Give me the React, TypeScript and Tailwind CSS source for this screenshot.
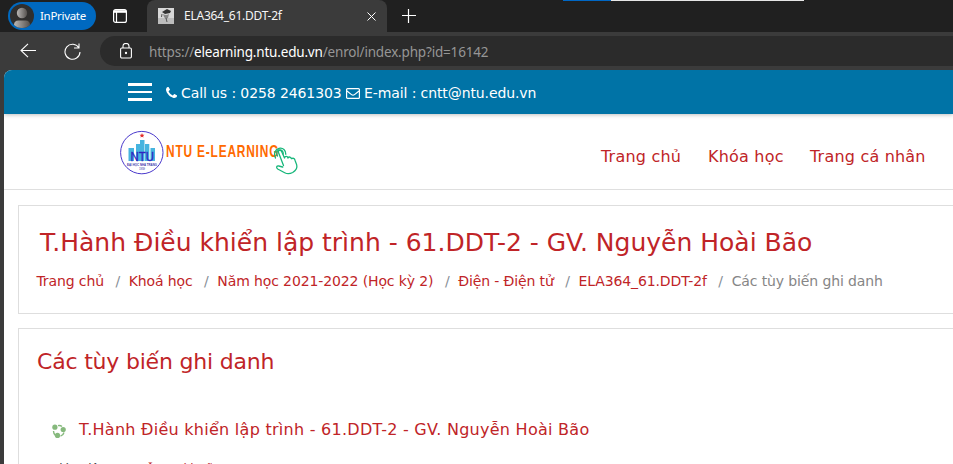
import React from "react";

function TabStrip() {
  return (
    <div className="relative flex h-8 shrink-0 bg-[#202020]">
      <div className="ml-2 mt-[2px] flex h-7 w-[88px] items-center rounded-full bg-[#0069c0] p-[2px] text-white">
        <svg className="size-6 shrink-0" viewBox="0 0 24 24">
          <defs>
            <linearGradient id="person" x1="0" x2="1">
              <stop offset="0" stopColor="#b9b7b5" />
              <stop offset="1" stopColor="#55514e" />
            </linearGradient>
            <clipPath id="round"><circle cx="12" cy="12" r="12" /></clipPath>
          </defs>
          <g clipPath="url(#round)">
            <rect width="24" height="24" fill="#302f2e" />
            <circle cx="12" cy="9" r="5.2" fill="url(#person)" />
            <path d="M4 24v-3q0-4.500 4.500-4.500h7q4.500 0 4.500 4.500v3z" fill="url(#person)" />
          </g>
        </svg>
        <span className="ml-[6px] text-[11.5px] leading-4 tracking-[-0.3px]">InPrivate</span>
      </div>
      <svg className="ml-[17px] mt-[9px] h-[14px] w-[14px]" viewBox="0 0 14 14" fill="none" stroke="#fff">
        <rect x=".6" y=".6" width="12.800" height="12.800" rx="2" strokeWidth="1.200" />
        <path d="M1 2.500h12" strokeWidth="2.600" />
        <path d="M3.500 3v10" strokeWidth="1.200" />
      </svg>
      <div className="ml-[20px] flex h-8 w-[240px] items-center rounded-t-lg bg-[#3b3b3b] text-[#f5f5f5]">
        <svg className="ml-[11px] h-4 w-4" viewBox="0 0 16 16">
          <rect width="16" height="16" fill="#d8d8d8" />
          <rect y="10" width="16" height="6" fill="#bdbdbd" />
          <path d="M4 4l5-3 4 2-1 2-5 1z" fill="#333" />
          <path d="M5 6q3 2 6 0l-1 4-2 1-2-2z" fill="#888" />
          <path d="M4 6l-.5 3M8 10l1 4" stroke="#555" />
        </svg>
        <span className="ml-[10px] text-[12px] leading-4 tracking-[-0.25px]">ELA364_61.DDT-2f</span>
        <svg className="ml-auto mr-[11px] size-[9px]" viewBox="0 0 9 9" stroke="#fff"><path d="M.5.5l8 8M8.500.5l-8 8" /></svg>
      </div>
      <svg className="ml-[15px] mt-[9px] size-[14px]" viewBox="0 0 14 14" stroke="#fff" strokeWidth="1.200"><path d="M0 6.500h14M6.500 0v14" /></svg>
      <div className="absolute left-[563px] top-0 flex h-px w-[241px] bg-[#e6e6e6]"><div className="w-12 bg-[#0067c5]" /></div>
    </div>
  );
}

function Toolbar() {
  return (
    <div className="flex h-[38px] shrink-0 items-center bg-[#3b3b3b]">
      <svg className="ml-5 h-4 w-4" viewBox="0 0 16 16" fill="none" stroke="#fff" strokeWidth="1.100"><path d="M16 7.500H.8M8 .8L1 7.500l7 6.700" /></svg>
      <svg className="ml-7 h-[17px] w-[17px]" viewBox="0 0 17 17" fill="none" stroke="#fff" strokeWidth="1.100"><path d="M15 5A7.500 7.500 0 1 0 16 9M15 .5V5h-5" /></svg>
      <div className="ml-[19px] flex h-[30px] flex-1 items-center rounded-l-full bg-[#2b2b2b]">
        <svg className="ml-5 h-4 w-3" viewBox="0 0 12 16" fill="none" stroke="#fff" strokeWidth="1.100">
          <rect x=".6" y="5" width="10.800" height="10" rx="1.200" />
          <path d="M3 5V3a3 2.600 0 0 1 6 0v2" /><circle cx="6" cy="10" r=".6" fill="#fff" />
        </svg>
        <span className="ml-[17px] mt-[2px] whitespace-pre text-[13.5px] tracking-[-0.18px] text-[#969696]">https://<span className="text-white">elearning.ntu.edu.vn</span>/enrol/index.php?id=16142</span>
      </div>
    </div>
  );
}

function Logo() {
  return (
    <svg className="ml-[111px] mt-[13px] h-[50px] w-[190px] shrink-0" viewBox="0 0 190 50">
      <circle cx="26.800" cy="25.600" r="21.200" fill="#fff" stroke="#4a39cc" />
      <path d="M13.500 21h5.500v13h-5.500zM21 17h4v17h-4zM25 13h4.500v21h-4.500zM30 17h4.300v17h-4.300zM35.500 21h4.500v13h-4.500z" fill="#46b4df" />
      <path d="M27 6l.7 1.700 1.800.1-1.400 1.100.5 1.700-1.600-.9-1.600.9.5-1.700-1.400-1.100 1.800-.1z" fill="#e32b2b" />
      <text x="15.500" y="34" textLength="23.500" lengthAdjust="spacingAndGlyphs" fontSize="12.500" fontFamily="Liberation Sans" fill="#3023c2" stroke="#3023c2" strokeWidth=".3">NTU</text>
      <text x="12" y="39" textLength="30" lengthAdjust="spacingAndGlyphs" fontSize="4" fontWeight="bold" fontFamily="Liberation Sans" fill="#4038aa">ĐẠI HỌC NHA TRANG</text>
      <text x="24" y="42.500" textLength="6" fontSize="3" fontFamily="Liberation Sans" fill="#4038aa">1959</text>
      <text transform="translate(51 30) scale(.73 1)" x="0" y="0" textLength="154" lengthAdjust="spacing" fontSize="16.300" fontWeight="bold" fontFamily="Liberation Sans" fill="#ff6a00">NTU E-LEARNING</text>
      <g transform="translate(0 2.500)" fill="none" stroke="#18b77b" strokeWidth="1.300" strokeLinejoin="round" strokeLinecap="round">
        <path d="M168.500 36l-5-13c-.8-2 2-3 3-1.200l3 6.700c.5-2.500 3-2 3.500 0 1-1.700 3-1 3.500.7 1.600-1 3-.3 3.500 1.500l1.700 4.700c.8 3-1 5.800-4 7.600-3 1.500-6 1.300-8 .2l-7-3.700c-2-1.500-1-3.300 1-3l4 1" />
        <path d="M160.500 28.500c-2.500-3.500-.5-8.500 3.500-9.700 4-1 7 2 6.800 6M162.500 26.500c-1.500-2-1-5 1.200-5.800 2.800-.8 4.800 1 4.600 4" />
      </g>
    </svg>
  );
}

function PhoneIcon() {
  return (
    <svg className="ml-[14px] mt-px size-[11px]" viewBox="0 128 1408 1408" fill="#fff">
      <path d="M1408 1240q0 27-10 70.500t-21 68.500q-21 50-122 106-94 51-186 51-27 0-52.500-3.500t-57.500-12.500-47.500-14.500-55.500-20.500-49-18q-98-35-175-83-128-79-264.500-215.500t-215.500-264.500q-48-77-83-175-3-9-18-49t-20.500-55.500-14.500-47.500-12.500-57.500-3.500-52.500q0-92 51-186 56-101 106-122 25-11 68.500-21t70.500-10q14 0 21 3 18 6 53 76 11 19 30 54t35 63.500 31 53.500q3 4 17.500 25t21.500 35.500 7 28.500q0 20-28.500 50t-62 55-62 53-28.500 46q0 9 5 22.500t8.500 20.500 14 24 11.500 19q76 137 174 235t235 174q2 1 19 11.500t24 14 20.500 8.500 22.500 5q18 0 46-28.500t53-62 55-62 50-28.500q14 0 28.500 7t35.500 21.500 25 17.500q25 15 53.500 31t63.500 35 54 30q70 35 76 53 3 7 3 21z" />
    </svg>
  );
}

const crumbs = ["Trang chủ", "Khoá học", "Năm học 2021-2022 (Học kỳ 2)", "Điện - Điện tử", "ELA364_61.DDT-2f"];

export default function App() {
  return (
    <div className="flex h-[464px] w-[953px] flex-col overflow-hidden bg-[#3b3b3b] font-['Noto_Sans',sans-serif]">
      <TabStrip />
      <Toolbar />
      <main className="ml-1 min-h-0 flex-1 overflow-hidden rounded-tl-lg bg-white font-['DejaVu_Sans',sans-serif] text-[#c02427]">
        <div className="flex h-11 items-center bg-[#0073a6] text-white shadow-[0_1px_4px_rgba(0,0,0,.25)]">
          <div className="ml-[124px] flex w-6 flex-col gap-[5px]">
            <i className="h-[3px] bg-white" /><i className="h-[2px] bg-white" /><i className="h-[3px] bg-white" />
          </div>
          <PhoneIcon />
          <span className="ml-1 mt-[2px] w-[161px] whitespace-pre text-[14px] tracking-[-0.1px]">Call us : 0258 2461303</span>
          <svg className="ml-[4px] mt-[3px] h-[11px] w-[14px]" viewBox="0 0 14 11" fill="none" stroke="#fff" strokeWidth="1.200"><rect x=".6" y=".6" width="12.800" height="9.800" rx="1" /><path d="M1 3l4.500 3.600q1.500 1.200 3 0L13 3" /></svg>
          <span className="ml-1 mt-[2px] whitespace-pre text-[14px] tracking-[-0.1px]">E-mail : cntt@ntu.edu.vn</span>
        </div>
        <header className="flex h-[76px] border-b border-[#dfdfdf]">
          <Logo />
          <nav className="ml-[296px] mt-[31px] flex gap-[27px] whitespace-nowrap text-[16px] leading-6 tracking-[0.2px]">
            <span className="w-20">Trang chủ</span><span className="w-[75px]">Khóa học</span><span>Trang cá nhân</span>
          </nav>
        </header>
        <section className="ml-[14px] mt-[15px] h-[109px] border border-r-0 border-[#dedede]">
          <h1 className="ml-[21px] mt-[21px] whitespace-nowrap text-[25px] leading-8">T.Hành Điều khiển lập trình - 61.DDT-2 - GV. Nguyễn Hoài Bão</h1>
          <div className="ml-[17.5px] mt-[12px] flex whitespace-pre text-[14px] leading-5 tracking-[-0.12px]">
            {crumbs.map((c) => <React.Fragment key={c}><span>{c}</span><span className="ml-[11.5px] mr-[8.7px] text-[#868e96]">/</span></React.Fragment>)}
            <span className="text-[#868686]">Các tùy biến ghi danh</span>
          </div>
        </section>
        <section className="ml-[14px] mt-[14px] h-[160px] border border-r-0 border-[#dedede]">
          <h2 className="ml-[18px] mt-[17px] text-[22px] leading-8 tracking-[-0.2px]">Các tùy biến ghi danh</h2>
          <div className="ml-[33px] mt-[40px] flex items-center">
            <svg className="mt-[2px] size-[14px]" viewBox="0 0 14 14" fill="#86b97d"><path d="M6 1.600q2.500-.4 4 1M12 8.500q-.7 2.700-3.500 3.600M3.500 11.500q-2-1.800-2-4.500" fill="none" stroke="#86b97d" strokeWidth="1.400" /><circle cx="2.900" cy="3.200" r="2.600" /><circle cx="11.200" cy="5.500" r="2.600" /><circle cx="5.500" cy="11.400" r="2.600" /></svg>
            <span className="ml-[13px] text-[16px] leading-6 tracking-[0.27px]">T.Hành Điều khiển lập trình - 61.DDT-2 - GV. Nguyễn Hoài Bão</span>
          </div>
          <p className="ml-[31px] mt-[17px] text-[12px] leading-5 text-[#373a3c]">Giáo viên: <span className="tracking-[0.2px] text-[#c02427]">Nguyễn Hoài Bão</span></p>
        </section>
      </main>
    </div>
  );
}
